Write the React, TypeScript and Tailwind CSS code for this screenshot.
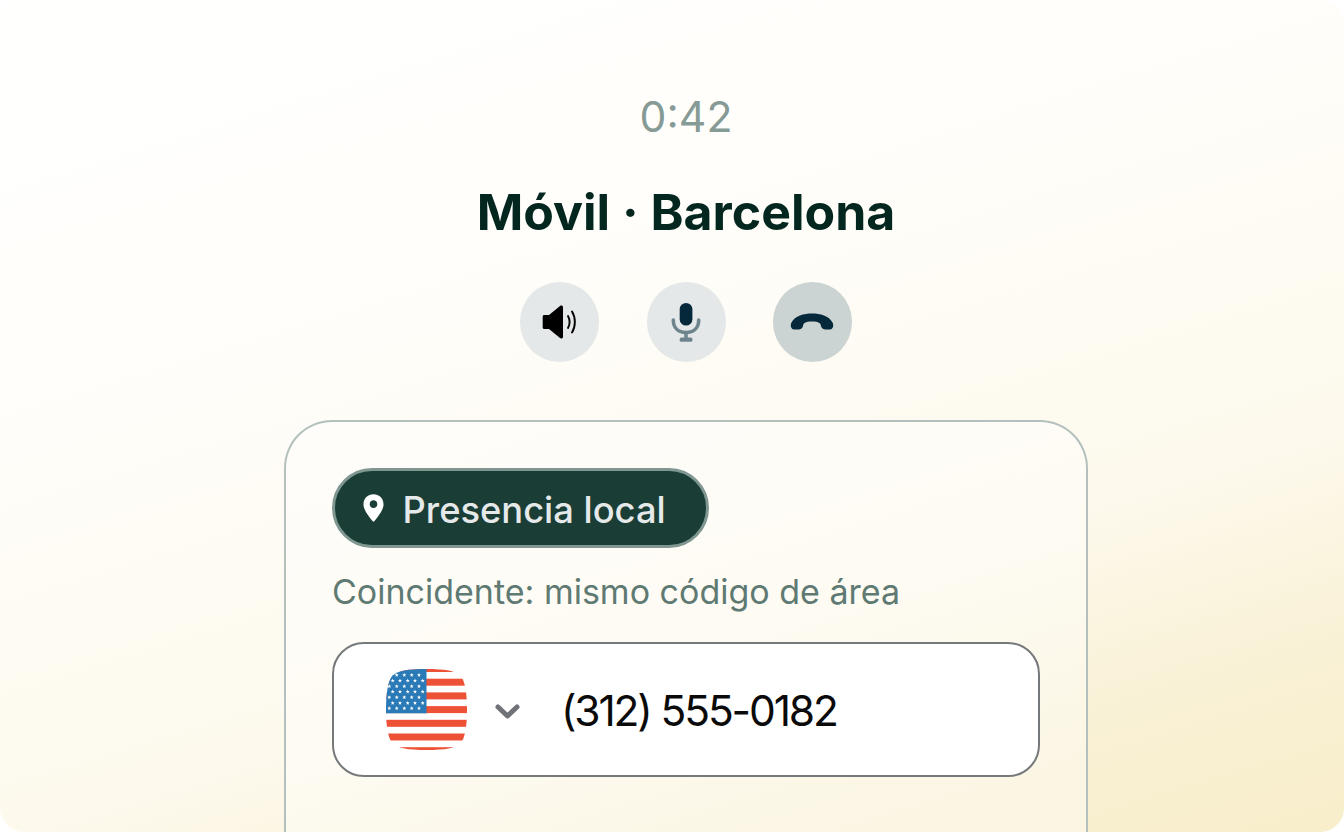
import React from "react";

// star rows of the canton, x offsets taken from the flag
const starRows: [number, number[]][] = [
  [6, [10.7, 18.3, 25.7, 33]],
  [11.7, [6.7, 14, 21.7, 29, 36.7]],
  [17.3, [3.3, 10.7, 18.3, 25.7, 33]],
  [22.7, [6.7, 14, 21.7, 29, 36.7]],
  [28.3, [3.3, 10.7, 18.3, 25.7, 33]],
  [34, [6.7, 14, 21.7, 29, 36.7]],
  [39.3, [3.3, 10.7, 18.3, 25.7, 33]],
];

function starPoints(cx: number, cy: number) {
  const pts: string[] = [];
  for (let i = 0; i < 10; i++) {
    const r = i % 2 === 0 ? 2.1 : 0.9;
    const a = -Math.PI / 2 + (i * Math.PI) / 5;
    pts.push(`${cx + r * Math.cos(a)},${cy + r * Math.sin(a)}`);
  }
  return pts.join(" ");
}

function UsFlag() {
  const stripes = [0, 1, 2, 3, 4, 5, 6];
  return (
    <svg width="81" height="81" viewBox="0 0 81 81" className="shrink-0">
      <defs>
        <clipPath id="flag-shape">
          <path d="M40.500 0C60 0 69 2 74.500 6.500C79 12 81 24 81 40.500C81 57 79 69 74.500 74.500C69 79 60 81 40.500 81C21 81 12 79 6.500 74.500C2 69 0 57 0 40.500C0 24 2 12 6.500 6.500C12 2 21 0 40.500 0Z" />
        </clipPath>
      </defs>
      <g clipPath="url(#flag-shape)">
        <rect width="81" height="81" fill="#ffffff" />
        {stripes.map((i) => (
          <rect key={i} x="0" y={-4 + i * 13.7} width="81" height="7" fill="#ee5236" />
        ))}
        <rect x="0" y="0" width="40.500" height="44.300" fill="#2a7ab8" />
        {starRows.map(([y, xs]) =>
          xs.map((x) => <polygon key={`${x}-${y}`} points={starPoints(x, y)} fill="#ffffff" />),
        )}
      </g>
    </svg>
  );
}

export default function App() {
  return (
    <div className="h-[832px] w-[1344px] overflow-hidden bg-white font-['Inter',sans-serif]">
      <div className="flex h-full flex-col items-center overflow-hidden rounded-[24px] bg-[linear-gradient(163deg,#fffffd_0%,#fffefb_30%,#fdf9ed_67%,#f9f1d5_85%,#f8eecb_100%)] pl-[28px] pt-[92px]">
        <p className="text-[42.700px] leading-[50px] text-[#869a96]">0:42</p>
        <h1 className="mt-[40px] text-[50px] font-bold leading-[60px] text-[#03261e]">Móvil · Barcelona</h1>

        <div className="mt-[40px] flex gap-[47.330px]">
          <button className="flex h-[80px] w-[79px] items-center justify-center rounded-full bg-[#e4e8e8]">
            <svg width="36" height="36" viewBox="0 0 36 36">
              <path d="M0.700 12.500C0.700 11.600 1.400 11 2.200 11H7L18 2C19.300 1 21 1.700 21 3.300V32.700C21 34.300 19.300 35 18 34L7 25H2.200C1.400 25 0.700 24.400 0.700 23.500Z" fill="#000000" />
              <path d="M26 12C28 15.700 28 20.300 26 24" fill="none" stroke="#000000" strokeWidth="1.900" strokeLinecap="round" />
              <path d="M30 7.500C33.800 13.500 33.800 22.500 30 28.500" fill="none" stroke="#000000" strokeWidth="1.900" strokeLinecap="round" />
            </svg>
          </button>
          <button className="flex h-[80px] w-[79px] items-center justify-center rounded-full bg-[#e4e8e8]">
            <svg width="32" height="40" viewBox="0 0 32 40">
              <rect x="9.700" y="1" width="12.700" height="22.500" rx="6.350" fill="#05293a" />
              <path d="M3.300 18C3.300 26 8.500 30.500 16 30.500C23.500 30.500 28.700 26 28.700 18" fill="none" stroke="#6e858e" strokeWidth="3.600" strokeLinecap="round" />
              <path d="M16 30V37" stroke="#6e858e" strokeWidth="3.600" />
              <rect x="9.700" y="35.500" width="12.700" height="4.300" rx="1.600" fill="#6e858e" />
            </svg>
          </button>
          <button className="flex h-[80px] w-[79px] items-center justify-center rounded-full bg-[#cbd4d2]">
            <svg width="44" height="20" viewBox="0 0 44 20">
              <path d="M1.200 11C5 3.500 14 1.500 22 1.500C30 1.500 39 3.500 42.800 11C44 14.500 42.500 17.500 40 17.500H35.500C33 17.500 31.500 16 31 14C30.500 11 29 9.500 22 9.500C15 9.500 13.500 11 13 14C12.500 16 11 17.500 8.500 17.500H4C1.500 17.500 0 14.500 1.200 11Z" fill="#05293a" />
            </svg>
          </button>
        </div>

        <div className="mt-[58px] flex w-[804px] flex-1 flex-col items-start rounded-t-[48px] border-2 border-b-0 border-[#b3c0bd] bg-white/40 px-[46px] pt-[46px]">
          <div className="flex h-[80px] items-center gap-[19px] rounded-full border-[3.500px] border-[#7f9691] bg-[#1a3d36] pl-[27.500px] pr-[40px]">
            <svg width="21" height="28" viewBox="0 0 22 29">
              <path fillRule="evenodd" d="M11 0C17 0 21.500 4.500 21.500 10.500C21.500 17 14.500 25 12 28C11.500 28.700 10.500 28.700 10 28C7.500 25 0.500 17 0.500 10.500C0.500 4.500 5 0 11 0ZM11 6.500C8.800 6.500 7 8.300 7 10.500C7 12.700 8.800 14.500 11 14.500C13.200 14.500 15 12.700 15 10.500C15 8.300 13.200 6.500 11 6.500Z" fill="#ffffff" />
            </svg>
            <span className="pt-[5px] text-[36.300px] font-medium leading-none text-[#e6e9e9]">Presencia local</span>
          </div>
          <p className="mt-[24px] text-[34px] leading-[40px] text-[#5f7a72]">Coincidente: mismo código de área</p>
          <div className="mt-[30px] flex h-[135px] w-[708px] items-center rounded-[32px] border-2 border-[#76797c] bg-white pl-[52px]">
            <UsFlag />
            <svg width="25" height="15" viewBox="0 0 25 15" className="ml-[28px] mt-[4px] shrink-0">
              <path d="M3 3L12.500 12L22 3" fill="none" stroke="#6f7377" strokeWidth="5" strokeLinecap="round" strokeLinejoin="round" />
            </svg>
            <span className="ml-[41px] pt-[4px] text-[42.500px] leading-none tracking-[-2.150px] text-[#0a0a0a]">(312) 555-0182</span>
          </div>
        </div>
      </div>
    </div>
  );
}
